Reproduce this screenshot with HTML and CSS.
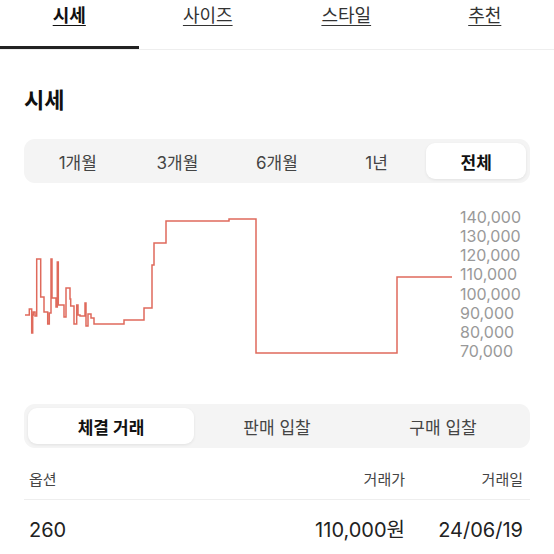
FILE: index.html
```html
<!DOCTYPE html>
<html lang="ko">
<head>
    <meta charset="UTF-8">
    <meta name="viewport" content="width=device-width, initial-scale=1.0">
    <title>시세</title>
    <link rel="stylesheet" href="styles.css">
</head>
<body>

<nav class="tabs">
    <a class="tab active" href="#">시세</a>
    <a class="tab" href="#">사이즈</a>
    <a class="tab" href="#">스타일</a>
    <a class="tab" href="#">추천</a>
</nav>

<section class="price">
    <h2>시세</h2>

    <div class="segment period">
        <span class="seg-item">1개월</span>
        <span class="seg-item">3개월</span>
        <span class="seg-item">6개월</span>
        <span class="seg-item">1년</span>
        <span class="seg-item selected">전체</span>
    </div>

    <div class="chart">
        <svg class="chart-line" width="430" height="160" viewBox="0 0 430 160">
            <path d="M1,110 H5.3 V104 H7.7 V128 H8.7 V110 H9.3 V107 H11 V111 H12.7 V54 H16.7 V92 H20 V107 H21 V107 H23.7 V119 H25.3 V108 H27 V54 H28 V93 H31 V93 H32 V102 H33.3 V57 H34.3 V100 H40 V112 H42 V83 H46 V94 H46.7 V101 H50 V119 H52.7 V100 H54 V110 H56 V111 H61 V98 H62 V121 H64 V109 H67 V113 H70 V119 H76 V119 H100 V115 H120 V103 H128 V60 H130 V38 H142 V16 H205 V14 H232 V148 H373 V72 H428"
                  fill="none" stroke="#df6a5c" stroke-width="1.5" stroke-linejoin="miter"/>
        </svg>
        <div class="axis">
            <span>140,000</span>
            <span>130,000</span>
            <span>120,000</span>
            <span>110,000</span>
            <span>100,000</span>
            <span>90,000</span>
            <span>80,000</span>
            <span>70,000</span>
        </div>
    </div>

    <div class="segment trades">
        <span class="seg-item selected">체결 거래</span>
        <span class="seg-item">판매 입찰</span>
        <span class="seg-item">구매 입찰</span>
    </div>

    <div class="table">
        <div class="row head">
            <span>옵션</span>
            <span class="num">거래가</span>
            <span class="num">거래일</span>
        </div>
        <div class="row">
            <span>260</span>
            <span class="num">110,000원</span>
            <span class="num">24/06/19</span>
        </div>
    </div>
</section>

</body>
</html>
```

FILE: styles.css
```css
body {
    margin: 0;
    padding: 0;
    background: #fff;
    color: #222;
    font-family: Inter, "Noto Sans CJK KR", sans-serif;
}
.tabs {
    display: flex;
    border-bottom: 1px solid #eee;
}
.tab {
    flex: 1;
    box-sizing: border-box;
    height: 49px;
    padding-top: 5px;
    text-align: center;
    font-size: 18px;
    line-height: 22px;
    color: #333;
    text-decoration: underline;
    text-underline-offset: 3px;
}
.tab.active {
    color: #111;
    font-weight: 600;
    border-bottom: 3px solid #222;
}
.price {
    padding: 0 24px;
}
h2 {
    margin: 35px 0 0;
    font-size: 22px;
    line-height: 30px;
    font-weight: 700;
    color: #111;
}
.segment {
    display: flex;
    height: 44px;
    box-sizing: border-box;
    padding: 4px;
    background: #f4f4f4;
    border-radius: 11px;
}
.seg-item {
    flex: 1;
    display: flex;
    align-items: center;
    justify-content: center;
    border-radius: 9px;
    font-size: 17px;
    color: #444;
}
.seg-item.selected {
    background: #fff;
    color: #111;
    font-weight: 700;
    box-shadow: 0 1px 3px rgba(0, 0, 0, 0.08);
}
.period {
    margin-top: 24px;
}
.chart {
    display: flex;
    gap: 6px;
    height: 160px;
    margin-top: 22px;
}
.chart-line {
    display: block;
}
.axis {
    display: flex;
    flex-direction: column;
    padding-top: 3px;
    font-size: 16px;
    line-height: 19.15px;
    color: #999;
}
.trades {
    margin-top: 39px;
}
.table {
    margin-top: 22px;
}
.row {
    display: grid;
    grid-template-columns: 1fr 200px 118px;
    padding: 0 7px 0 5px;
}
.row.head {
    padding-bottom: 9px;
    border-bottom: 1px solid #eee;
    font-size: 15px;
    line-height: 20px;
    color: #444;
}
.row:not(.head) {
    padding-top: 17px;
    font-size: 20px;
    line-height: 26px;
    color: #222;
}
.num {
    text-align: right;
}
```
